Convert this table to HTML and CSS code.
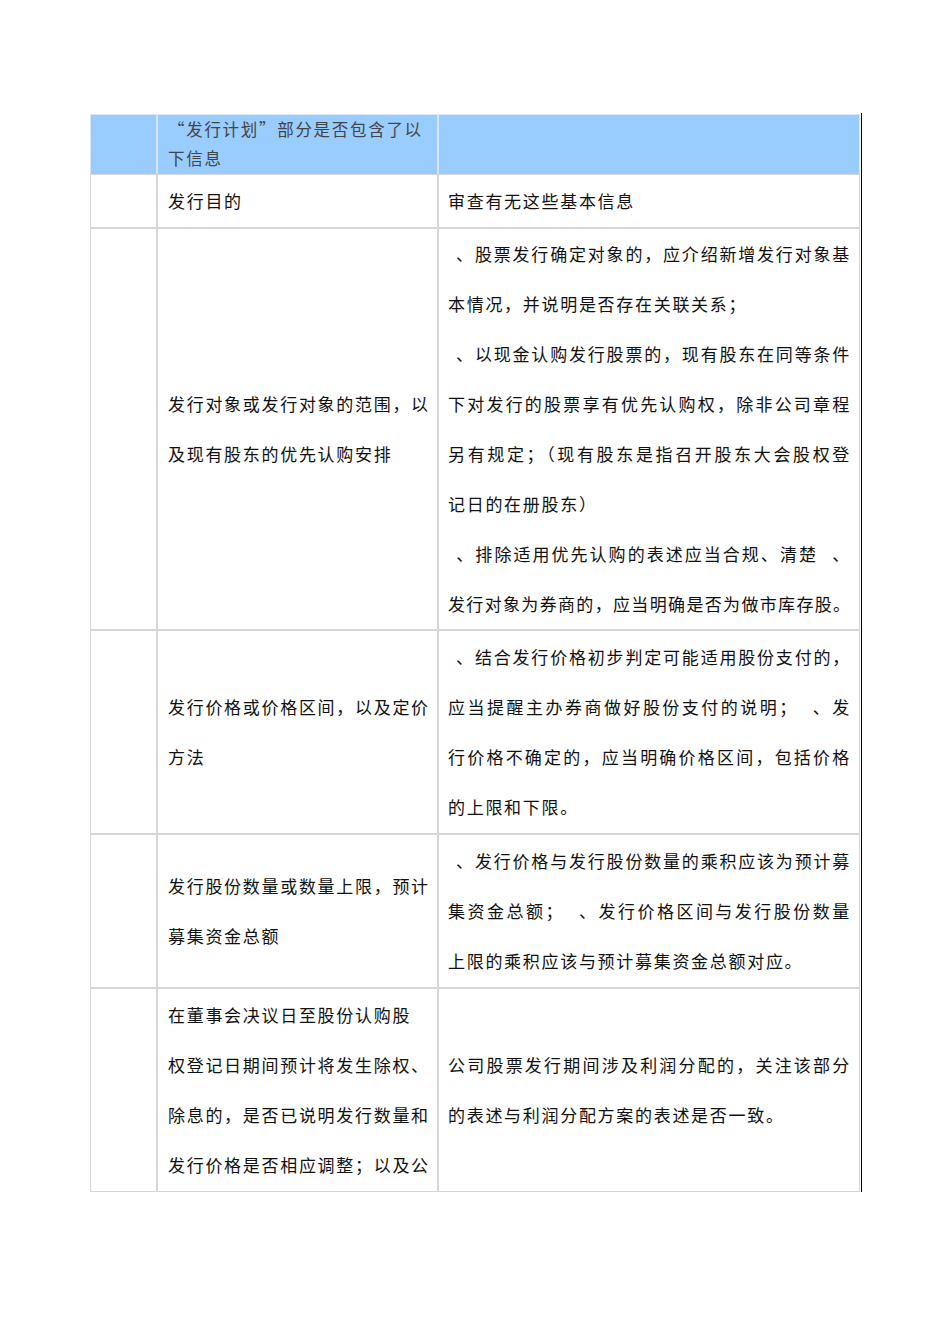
FILE: index.html
```html
<!DOCTYPE html>
<html lang="zh-CN">
<head>
<meta charset="utf-8">
<title>发行计划</title>
<link rel="stylesheet" href="styles.css">
</head>
<body>
<div class="page">
  <div class="sheet">
    <table class="grid">
      <colgroup>
        <col class="c1">
        <col class="c2">
        <col class="c3">
      </colgroup>
      <tr class="head">
        <td></td>
        <td><span class="ln">“发行计划”部分是否包含了以</span><span class="ln">下信息</span></td>
        <td></td>
      </tr>
      <tr>
        <td></td>
        <td>发行目的</td>
        <td>审查有无这些基本信息</td>
      </tr>
      <tr class="tall">
        <td></td>
        <td>
          <span class="ln full">发行对象或发行对象的范围，以</span>
          <span class="ln">及现有股东的优先认购安排</span>
        </td>
        <td>
          <span class="ln full"><span class="num"></span>、股票发行确定对象的，应介绍新增发行对象基</span>
          <span class="ln">本情况，并说明是否存在关联关系；</span>
          <span class="ln full"><span class="num"></span>、以现金认购发行股票的，现有股东在同等条件</span>
          <span class="ln full">下对发行的股票享有优先认购权，除非公司章程</span>
          <span class="ln full">另有规定；（现有股东是指召开股东大会股权登</span>
          <span class="ln">记日的在册股东）</span>
          <span class="ln full"><span class="num"></span>、排除适用优先认购的表述应当合规、清楚<span class="gap"></span>、</span>
          <span class="ln full tight">发行对象为券商的，应当明确是否为做市库存股。</span>
        </td>
      </tr>
      <tr>
        <td></td>
        <td>
          <span class="ln full">发行价格或价格区间，以及定价</span>
          <span class="ln">方法</span>
        </td>
        <td>
          <span class="ln full"><span class="num"></span>、结合发行价格初步判定可能适用股份支付的，</span>
          <span class="ln full">应当提醒主办券商做好股份支付的说明；<span class="gap"></span>、发</span>
          <span class="ln full">行价格不确定的，应当明确价格区间，包括价格</span>
          <span class="ln">的上限和下限。</span>
        </td>
      </tr>
      <tr>
        <td></td>
        <td>
          <span class="ln full">发行股份数量或数量上限，预计</span>
          <span class="ln">募集资金总额</span>
        </td>
        <td>
          <span class="ln full"><span class="num"></span>、发行价格与发行股份数量的乘积应该为预计募</span>
          <span class="ln full">集资金总额；<span class="gap"></span>、发行价格区间与发行股份数量</span>
          <span class="ln">上限的乘积应该与预计募集资金总额对应。</span>
        </td>
      </tr>
      <tr>
        <td></td>
        <td>
          <span class="ln">在董事会决议日至股份认购股</span>
          <span class="ln full">权登记日期间预计将发生除权、</span>
          <span class="ln full">除息的，是否已说明发行数量和</span>
          <span class="ln full">发行价格是否相应调整；以及公</span>
        </td>
        <td>
          <span class="ln full">公司股票发行期间涉及利润分配的，关注该部分</span>
          <span class="ln">的表述与利润分配方案的表述是否一致。</span>
        </td>
      </tr>
    </table>
  </div>
</div>
</body>
</html>
```

FILE: styles.css
```css
html, body {
  margin: 0;
  padding: 0;
  background: #ffffff;
}

body {
  font-family: "Noto Sans CJK SC", "Noto Sans", "Liberation Sans", sans-serif;
  color: #111111;
}

.page {
  padding: 113px 0 0 90px;
}

.sheet {
  width: 771px;
  border-right: 1px solid #000000;
  padding-top: 1px;
}

.grid {
  width: 770px;
  table-layout: fixed;
  border-collapse: separate;
  border-spacing: 0;
}

.c1 { width: 67px; }
.c2 { width: 281px; }
.c3 { width: 422px; }

.grid td {
  border: 1px solid #d6d6d6;
  padding: 1px 8px 1px 10px;
  vertical-align: middle;
  font-size: 17px;
  line-height: 50px;
  letter-spacing: 1.7px;
  white-space: nowrap;
  overflow: hidden;
}

.grid .tall td {
  padding-top: 0;
  padding-bottom: 0;
}

.grid td:nth-child(3) {
  padding-left: 9px;
}

.head td {
  background: #99ccff;
  border-color: #d6e6f5 #d6e6f5 #b4c8dc #d6e6f5;
  padding-top: 0;
  padding-bottom: 0;
  font-size: 16.5px;
  line-height: 29px;
  letter-spacing: 1.7px;
  color: #444444;
}

.ln {
  display: block;
}

.ln.full {
  text-align: justify;
  text-align-last: justify;
}

.ln.tight {
  letter-spacing: 0.9px;
}

.num {
  display: inline-block;
  width: 8px;
}

.gap {
  display: inline-block;
  width: 14px;
}
```
